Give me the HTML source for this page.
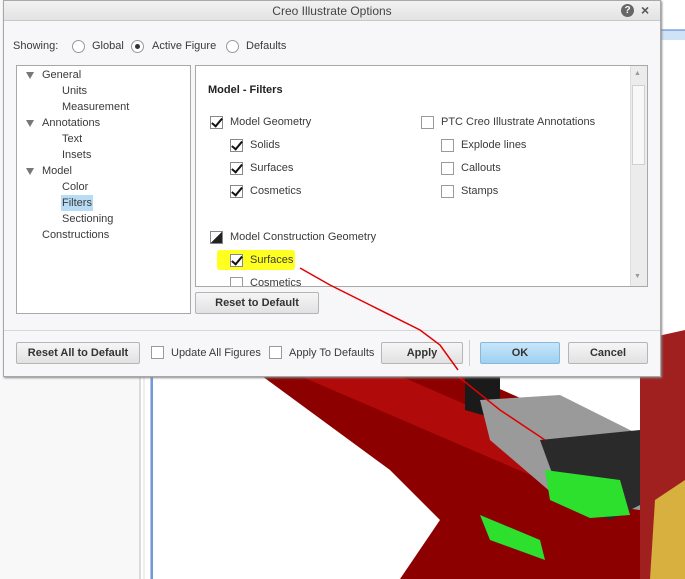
<!DOCTYPE html>
<html><head><style>
*{margin:0;padding:0;box-sizing:border-box}
body{width:685px;height:579px;overflow:hidden;background:#fff;font-family:"Liberation Sans",sans-serif;font-size:11px;color:#3a3a3a;position:relative}
.a{position:absolute;white-space:nowrap}
.cb{position:absolute;width:13px;height:13px;border:1px solid #9a9a9a;background:#fff}
.ck{position:absolute;width:13px;height:13px;border:1px solid #888;background:#fff}
.ck:after{content:"";position:absolute;left:3px;top:-1px;width:4px;height:9px;border:solid #111;border-width:0 2.5px 2.5px 0;transform:rotate(40deg)}
.rb{position:absolute;width:13px;height:13px;border:1px solid #999;border-radius:50%;background:#fff}
.btn{position:absolute;border:1px solid #b5b5b5;border-radius:2px;background:linear-gradient(#f6f6f6,#e2e2e2);font-weight:bold;text-align:center;color:#333;font-size:11px}
.tri{position:absolute;width:0;height:0;border-left:4px solid transparent;border-right:4px solid transparent;border-top:7px solid #777}
</style></head><body>
<svg class="a" style="left:0;top:0" width="685" height="579">
<rect x="0" y="0" width="140" height="579" fill="#f8f8f8"/>
<line x1="140" y1="376" x2="140" y2="579" stroke="#bbb"/>
<line x1="144" y1="376" x2="144" y2="579" stroke="#ddd"/>
<rect x="150" y="376" width="3" height="203" fill="#a8c8f0"/>
<line x1="152" y1="376" x2="152" y2="579" stroke="#4a60c0"/>
<rect x="660" y="30" width="25" height="10" fill="#cfe3f6"/>
<line x1="660" y1="30" x2="685" y2="30" stroke="#4a7bd0"/>
<polygon points="262,376 470,376 685,470 685,579 400,579 440,520 390,470" fill="#8c0000"/>
<polygon points="300,376 400,376 640,480 600,505" fill="#b00a0a"/>
<polygon points="465,376 500,376 500,420 465,410" fill="#1a1a1a"/>
<polygon points="480,400 560,395 650,440 640,510 560,500 490,440" fill="#9a9a9a"/>
<polygon points="540,440 640,430 650,500 610,520 560,495" fill="#2a2a2a"/>
<polygon points="545,470 620,480 630,515 590,518 550,500" fill="#2ee02e"/>
<polygon points="480,515 540,540 545,560 490,540" fill="#2ee02e"/>
<polygon points="640,340 685,330 685,579 640,579" fill="#a02020"/>
<polygon points="655,500 685,480 685,579 650,579" fill="#d8b040"/>
<polyline points="300,268 330,285 370,305 420,330 450,370 500,410 545,440" fill="none" stroke="#e00000" stroke-width="1.5"/>
</svg>
<div class="a" style="left:3px;top:0;width:658px;height:377px;background:#f7f7f9;border:1px solid #a8a8a8;box-shadow:1px 1px 2px #888"></div>
<div class="a" style="left:4px;top:1px;width:656px;height:20px;background:linear-gradient(#f2f2f2,#e3e3e3);border-bottom:1px solid #c8c8c8"></div>
<div class="a" style="left:4px;top:4px;width:656px;text-align:center;font-size:12px;color:#444">Creo Illustrate Options</div>
<div class="a" style="left:621px;top:4px;width:13px;height:13px;border-radius:50%;background:#666;color:#fff;font-size:10px;font-weight:bold;text-align:center;line-height:13px">?</div>
<div class="a" style="left:641px;top:2px;font-size:14px;font-weight:bold;color:#555">×</div>
<div class="a" style="left:13px;top:40px">Showing:</div>
<div class="rb" style="left:72px;top:40px"></div><div class="a" style="left:92px;top:40px">Global</div>
<div class="rb" style="left:131px;top:40px"></div><div class="a" style="left:135px;top:44px;width:5px;height:5px;border-radius:50%;background:#333"></div><div class="a" style="left:152px;top:40px">Active Figure</div>
<div class="rb" style="left:226px;top:40px"></div><div class="a" style="left:246px;top:40px">Defaults</div>
<div class="a" style="left:16px;top:65px;width:175px;height:249px;background:#fff;border:1px solid #a8a8a8"></div>
<div class="tri" style="left:26px;top:72px"></div><div class="a" style="left:42px;top:69px">General</div>
<div class="a" style="left:62px;top:85px">Units</div>
<div class="a" style="left:62px;top:101px">Measurement</div>
<div class="tri" style="left:26px;top:120px"></div><div class="a" style="left:42px;top:117px">Annotations</div>
<div class="a" style="left:62px;top:133px">Text</div>
<div class="a" style="left:62px;top:149px">Insets</div>
<div class="tri" style="left:26px;top:168px"></div><div class="a" style="left:42px;top:165px">Model</div>
<div class="a" style="left:62px;top:181px">Color</div>
<div class="a" style="left:61px;top:195px;width:32px;height:16px;background:#b8dcf4"></div><div class="a" style="left:62px;top:197px">Filters</div>
<div class="a" style="left:62px;top:213px">Sectioning</div>
<div class="a" style="left:42px;top:229px">Constructions</div>
<div class="a" style="left:195px;top:65px;width:453px;height:222px;background:#fff;border:1px solid #a8a8a8;overflow:hidden">
<div class="a" style="left:434px;top:0;width:17px;height:220px;background:#ececec;border-left:1px solid #ddd"></div>
<div class="a" style="left:436px;top:19px;width:13px;height:80px;background:#f8f8f8;border:1px solid #d0d0d0"></div>
<div class="a" style="left:438px;top:4px;color:#999;font-size:7px">▲</div>
<div class="a" style="left:438px;top:207px;color:#999;font-size:7px">▼</div>
<div class="a" style="left:12px;top:18px;font-weight:bold;color:#222">Model - Filters</div>
<div class="ck" style="left:14px;top:50px"></div><div class="a" style="left:34px;top:50px">Model Geometry</div>
<div class="ck" style="left:34px;top:73px"></div><div class="a" style="left:54px;top:73px">Solids</div>
<div class="ck" style="left:34px;top:96px"></div><div class="a" style="left:54px;top:96px">Surfaces</div>
<div class="ck" style="left:34px;top:119px"></div><div class="a" style="left:54px;top:119px">Cosmetics</div>
<div class="cb" style="left:225px;top:50px"></div><div class="a" style="left:245px;top:50px">PTC Creo Illustrate Annotations</div>
<div class="cb" style="left:245px;top:73px"></div><div class="a" style="left:265px;top:73px">Explode lines</div>
<div class="cb" style="left:245px;top:96px"></div><div class="a" style="left:265px;top:96px">Callouts</div>
<div class="cb" style="left:245px;top:119px"></div><div class="a" style="left:265px;top:119px">Stamps</div>
<div class="a" style="left:14px;top:165px;width:13px;height:13px;border:1px solid #888;background:linear-gradient(135deg,#fff 50%,#222 50%)"></div><div class="a" style="left:34px;top:165px">Model Construction Geometry</div>
<div class="a" style="left:21px;top:184px;width:78px;height:20px;background:#ffff20;border-radius:3px"></div>
<div class="ck" style="left:34px;top:188px"></div><div class="a" style="left:54px;top:188px">Surfaces</div>
<div class="cb" style="left:34px;top:211px"></div><div class="a" style="left:54px;top:211px">Cosmetics</div>
</div>
<div class="btn" style="left:195px;top:292px;width:124px;height:22px;line-height:20px">Reset to Default</div>
<div class="a" style="left:4px;top:330px;width:656px;border-top:1px solid #d8d8d8"></div>
<div class="btn" style="left:16px;top:342px;width:124px;height:22px;line-height:20px">Reset All to Default</div>
<div class="cb" style="left:151px;top:346px"></div><div class="a" style="left:171px;top:347px">Update All Figures</div>
<div class="cb" style="left:269px;top:346px"></div><div class="a" style="left:289px;top:347px">Apply To Defaults</div>
<div class="btn" style="left:381px;top:342px;width:82px;height:22px;line-height:20px">Apply</div>
<div class="a" style="left:469px;top:340px;height:26px;border-left:1px solid #ccc"></div>
<div class="btn" style="left:480px;top:342px;width:80px;height:22px;line-height:20px;background:linear-gradient(#c8e6fa,#9fd0f2);border-color:#8ab8dc">OK</div>
<div class="btn" style="left:568px;top:342px;width:80px;height:22px;line-height:20px">Cancel</div>
<svg class="a" style="left:0;top:0" width="685" height="579"><polyline points="300,268 330,285 370,305 420,330 440,345 458,370" fill="none" stroke="#e00000" stroke-width="1.5"/></svg>
</body></html>
